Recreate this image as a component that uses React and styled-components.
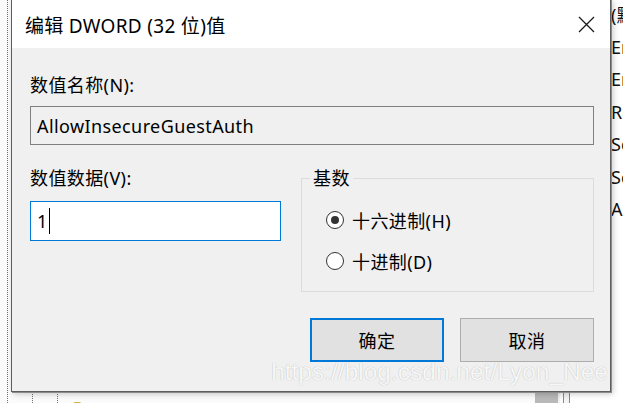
import React from 'react';
import styled, { createGlobalStyle } from 'styled-components';

const uiFont = `"Noto Sans", "Noto Sans CJK SC", sans-serif`;

const GlobalStyle = createGlobalStyle`
  html, body { margin:0; padding:0; }
  body { font-family:${uiFont}; background:#fff; }
`;

const registryValues = [
    '(默认)',
    'EnablePlainTextPassword',
    'EnableSecuritySignature',
    'RequireSecuritySignature',
    'ServiceDll',
    'ServiceDllUnloadOnStop',
    'AllowInsecureGuestAuth',
];

const treeRows = Array.from({ length: 16 }, (_, i) => i);

function FolderIcon() {
    return (
        <svg width="20" height="19" viewBox="0 0 20 19">
            <path d="M1 2h6l2 2h10v14H1z" fill="#d9b14f" />
            <path d="M1 6h18v12H1z" fill="#eccb6c" />
        </svg>
    );
}

function CloseIcon() {
    return (
        <svg width="17" height="17" viewBox="0 0 17 17">
            <path d="M1 1L16 16M16 1L1 16" stroke="#1a1a1a" strokeWidth="1.3" fill="none" />
        </svg>
    );
}

function Radio({ checked, children }) {
    return (
        <RadioRow>
            <RadioCircle $checked={checked} />
            <span>{children}</span>
        </RadioRow>
    );
}

function App() {
    return (
        <>
            <GlobalStyle />
            <Screen>
                <Regedit>
                    <TreePane>
                        <Guide $w={25} />
                        <Guide $w={25} />
                        <Guide $w={16} />
                        <Folders>
                            {treeRows.map((r) => (
                                <TreeRow key={r}>
                                    <FolderIcon />
                                </TreeRow>
                            ))}
                        </Folders>
                    </TreePane>
                    <ScrollTrack>
                        <ScrollThumb />
                    </ScrollTrack>
                    <Splitter />
                    <ListPane>
                        {registryValues.map((name) => (
                            <ValueRow key={name}>
                                <ValueIcon>ab</ValueIcon>
                                <ValueName>{name}</ValueName>
                            </ValueRow>
                        ))}
                    </ListPane>
                </Regedit>

                <Dialog>
                    <TitleBar>
                        <Title>编辑 DWORD (32 位)值</Title>
                        <CloseIcon />
                    </TitleBar>
                    <Body>
                        <Label $top={25}>数值名称(N):</Label>
                        <NameBox>AllowInsecureGuestAuth</NameBox>
                        <DataRow>
                            <DataColumn>
                                <Label>数值数据(V):</Label>
                                <ValueInput>
                                    1<Caret />
                                </ValueInput>
                            </DataColumn>
                            <GroupBox>
                                <Legend>基数</Legend>
                                <RadioList>
                                    <Radio checked>十六进制(H)</Radio>
                                    <Radio>十进制(D)</Radio>
                                </RadioList>
                            </GroupBox>
                        </DataRow>
                        <ButtonRow>
                            <Button $primary>确定</Button>
                            <Button>取消</Button>
                        </ButtonRow>
                    </Body>
                </Dialog>

                <Watermark>https://blog.csdn.net/Lyon_Nee</Watermark>
            </Screen>
        </>
    );
}
export default App;

const Screen = styled.div`
    position:relative;
    width:623px; height:403px;
    overflow:hidden;
    background:#fbfbfb;
`
const Regedit = styled.div`
    display:flex;
    height:100%;
`
const TreePane = styled.div`
    display:flex;
    width:535px; flex-shrink:0;
    padding-left:7px;
    box-sizing:border-box;
`
const Guide = styled.div`
    width:${(p) => p.$w}px; height:100%; flex-shrink:0;
    border-left:1px dotted #6f6f6f;
    box-sizing:border-box;
`
const Folders = styled.div`
    display:flex; flex-direction:column;
    padding:6px 0 0 0;
`
const TreeRow = styled.div`
    height:26px; flex-shrink:0;
    padding-top:4px; box-sizing:border-box;
`
const ScrollTrack = styled.div`
    width:25px; flex-shrink:0;
    background:#f0f0f0;
    display:flex; flex-direction:column; justify-content:flex-end;
`
const ScrollThumb = styled.div`
    height:60px; margin:0 2px 0 0;
    background:#b9b9b9;
`
const Splitter = styled.div`
    width:7px; margin-left:3px; flex-shrink:0;
    border-left:1px solid #8a8a8a; border-right:1px solid #8a8a8a;
    box-sizing:border-box;
    background:#f4f4f4;
`
const ListPane = styled.div`
    flex:1; min-width:0;
    display:flex; flex-direction:column;
    margin-top:-2px;
    background:#fff;
    overflow:hidden;
`
const ValueRow = styled.div`
    display:flex; align-items:center;
    height:32.5px; flex-shrink:0;
    padding-left:16px;
    white-space:nowrap;
`
const ValueIcon = styled.span`
    width:20px; margin-right:5px; flex-shrink:0;
    font-size:10px; color:#c03030;
`
const ValueName = styled.span`
    font-size:18px; color:#111;
`
const Dialog = styled.div`
    position:absolute; left:11px; top:-1px;
    width:600px;
    box-sizing:border-box;
    border:1px solid #5e5e5e;
    background:#f0f0f0;
    box-shadow:1px 1px 0 #8c8c8c, 2px 2px 6px rgba(0,0,0,0.22);
    display:flex; flex-direction:column;
`
const TitleBar = styled.div`
    display:flex; align-items:center; justify-content:space-between;
    height:48px;
    padding:1px 15px 0 13px;
    box-sizing:border-box;
    background:#fff;
`
const Title = styled.span`
    font-size:19px; letter-spacing:0.3px; color:#000;
`
const Body = styled.div`
    display:flex; flex-direction:column;
    padding:0 16px 29px 18px;
    font-size:18px; letter-spacing:0.4px; color:#000;
`
const Label = styled.div`
    line-height:24px;
    margin-top:${(p) => p.$top || 0}px;
`
const NameBox = styled.div`
    margin-top:9px;
    height:39px;
    box-sizing:border-box;
    border:1px solid #7f7f7f;
    padding-left:6px;
    display:flex; align-items:center;
`
const DataRow = styled.div`
    display:flex; gap:20px;
    margin-top:21px;
`
const DataColumn = styled.div`
    width:251px;
    display:flex; flex-direction:column;
`
const ValueInput = styled.div`
    margin-top:11px;
    height:40px;
    box-sizing:border-box;
    border:1px solid #0078d7;
    background:#fff;
    padding-left:6px;
    display:flex; align-items:center;
`
const Caret = styled.span`
    width:1px; height:26px;
    margin-left:1px;
    background:#000;
`
const GroupBox = styled.fieldset`
    flex:1;
    margin:0;
    height:126px;
    box-sizing:border-box;
    border:1px solid #dcdcdc;
    padding:18px 0 0 8px;
    min-width:0;
`
const Legend = styled.legend`
    padding:0 3px;
    line-height:24px;
`
const RadioList = styled.div`
    display:flex; flex-direction:column; gap:17px;
    padding-left:16px;
`
const RadioRow = styled.div`
    display:flex; align-items:center; gap:8px;
    height:24px;
`
const RadioCircle = styled.span`
    width:18px; height:18px; flex-shrink:0;
    box-sizing:border-box;
    border-radius:50%;
    border:1px solid #333;
    background:#fff;
    display:flex; align-items:center; justify-content:center;
    &::after {
        content:'';
        width:8px; height:8px;
        border-radius:50%;
        background:#333;
        display:${(p) => (p.$checked ? 'block' : 'none')};
    }
`
const ButtonRow = styled.div`
    display:flex; justify-content:flex-end; gap:16px;
    margin-top:26px;
`
const Button = styled.div`
    width:134px; height:44px;
    box-sizing:border-box;
    display:flex; align-items:center; justify-content:center;
    background:#e1e1e1;
    border:${(p) => (p.$primary ? '2px solid #0078d7' : '1px solid #adadad')};
`
const Watermark = styled.div`
    position:absolute; right:15px; top:358px;
    font-family:"Liberation Sans", Arial, sans-serif;
    font-size:24.5px; line-height:28px;
    color:rgba(255,255,255,0.92);
    text-shadow:0 0 1px rgba(0,0,0,0.3);
    white-space:nowrap;
`
